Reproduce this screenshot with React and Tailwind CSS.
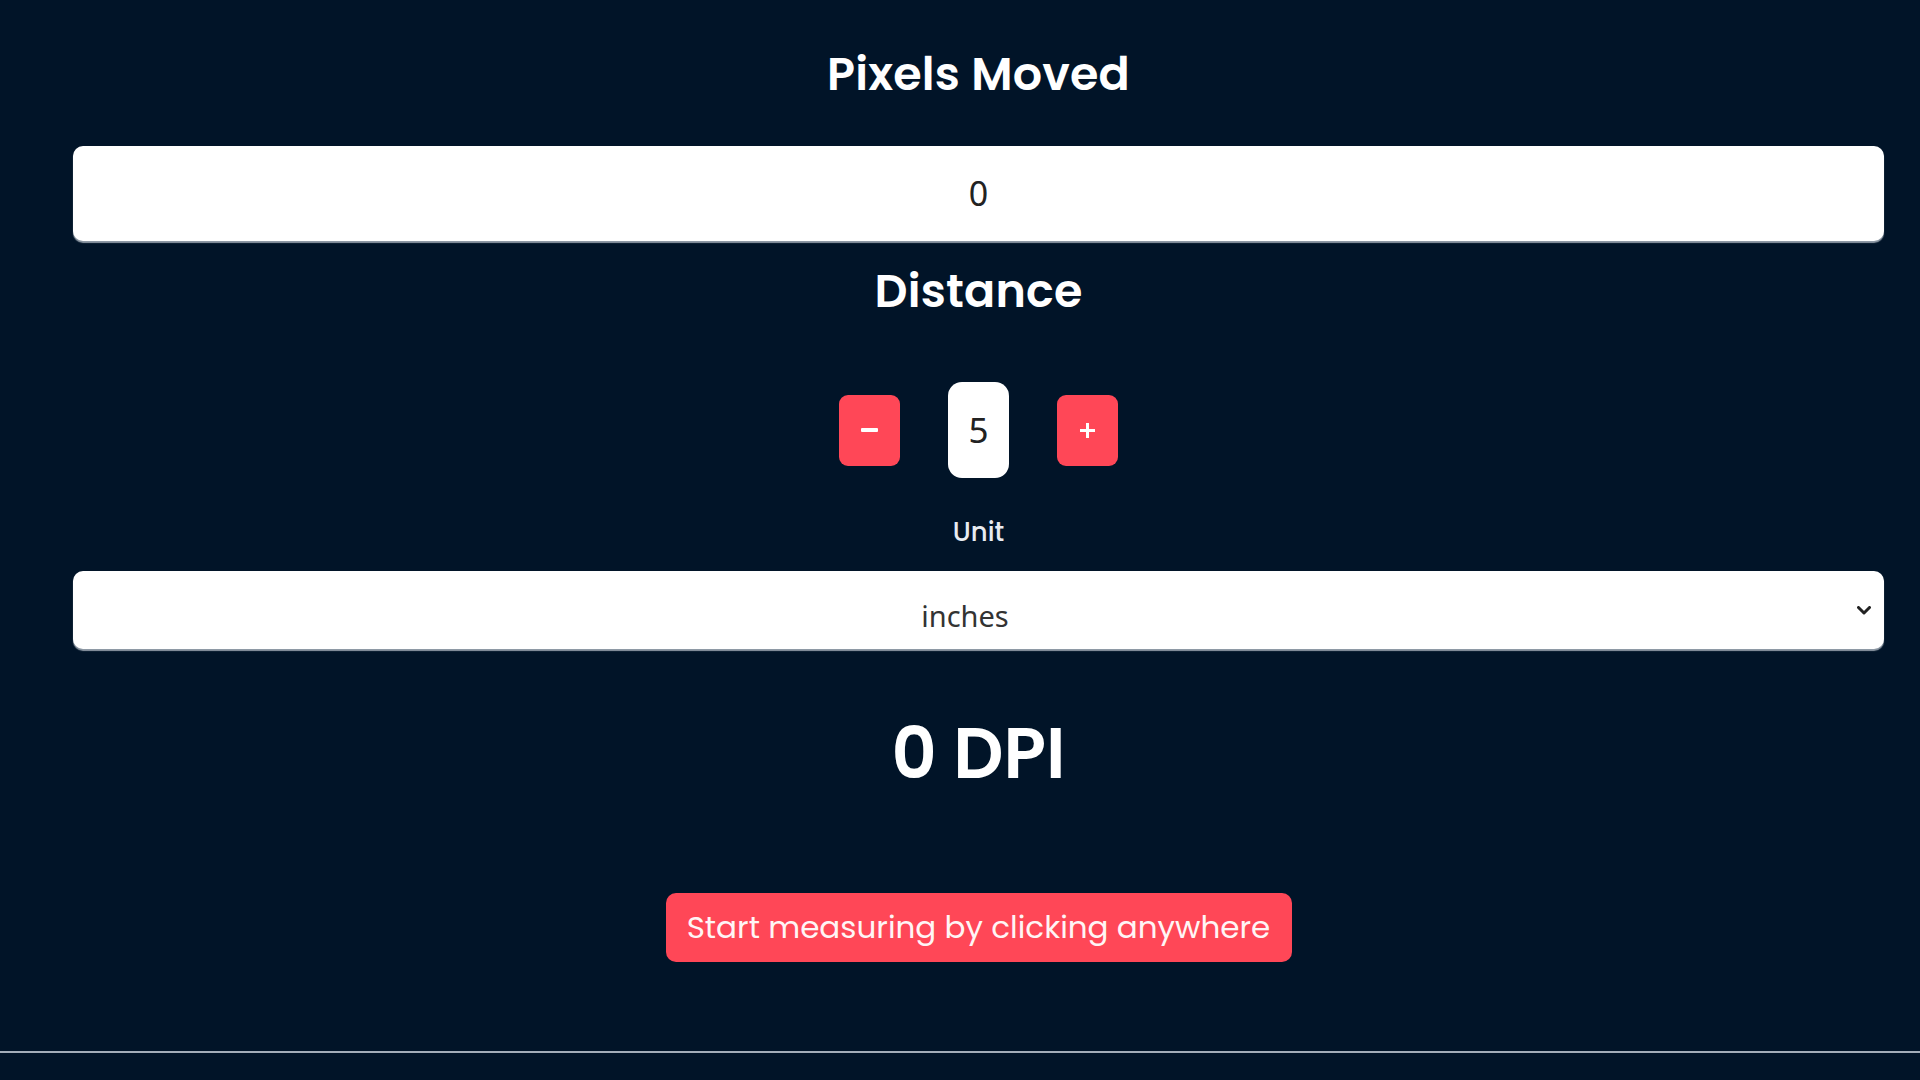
import React, { useState } from "react";

export default function App() {
  const [distance, setDistance] = useState(5);
  const [unit, setUnit] = useState("inches");

  return (
    <div className="min-h-screen bg-[#011428] font-['Poppins','Inter',sans-serif] text-white">
      <div className="pl-[73px] pr-[36px] pt-[44px] flex flex-col items-center">
        <h2 className="text-[46px] font-semibold leading-[60px] tracking-[0.2px]">Pixels Moved</h2>

        <div className="mt-[42px] w-full h-[95px] rounded-[10px] bg-white shadow-[0_2px_1px_rgba(150,160,172,0.95)] flex items-center justify-center">
          <span className="font-['Noto_Sans','Open_Sans',sans-serif] text-[34px] text-[#222]">0</span>
        </div>

        <h2 className="mt-[20px] text-[46px] font-semibold leading-[60px] tracking-[0.2px]">Distance</h2>

        <div className="mt-[61px] h-[96px] flex items-center gap-[48px]">
          <button
            onClick={() => setDistance(distance - 1)}
            className="w-[61px] h-[71px] rounded-[9px] bg-[#ff4757] flex items-center justify-center"
          >
            <span className="block w-[17px] h-[4px] bg-white rounded-[1px]" />
          </button>
          <div className="w-[61px] h-[96px] rounded-[14px] bg-white flex items-center justify-center">
            <span className="font-['Noto_Sans','Open_Sans',sans-serif] text-[35px] text-[#222]">{distance}</span>
          </div>
          <button
            onClick={() => setDistance(distance + 1)}
            className="w-[61px] h-[71px] rounded-[9px] bg-[#ff4757] flex items-center justify-center relative"
          >
            <span className="absolute w-[15px] h-[3px] bg-white" />
            <span className="absolute w-[3px] h-[15px] bg-white" />
          </button>
        </div>

        <label className="mt-[38px] text-[26px] leading-[32px] font-medium text-[#e8ecf2]">Unit</label>

        <div className="mt-[23px] w-full relative">
          <select
            value={unit}
            onChange={(e) => setUnit(e.target.value)}
            className="appearance-none w-full h-[78px] rounded-[10px] bg-white shadow-[0_2px_1px_rgba(150,160,172,0.95)] text-center pt-[12px] pr-[27px] font-['Noto_Sans','Open_Sans',sans-serif] text-[29px] text-[#333] outline-none"
          >
            <option value="inches">inches</option>
            <option value="centimeters">centimeters</option>
            <option value="millimeters">millimeters</option>
          </select>
          <svg
            className="absolute right-[13px] top-[35px] pointer-events-none"
            width="14"
            height="9"
            viewBox="0 0 14 9"
          >
            <polyline points="1.5,1.5 7,7 12.5,1.5" fill="none" stroke="#222" strokeWidth="3" strokeLinecap="round" strokeLinejoin="round" />
          </svg>
        </div>

        <div className="mt-[65px] text-[70px] leading-[80px] font-semibold">0 DPI</div>

        <button className="mt-[99px] h-[69px] w-[626px] rounded-[10px] bg-[#ff4757] text-[31px] font-normal text-[#fff5f5]">
          Start measuring by clicking anywhere
        </button>
      </div>
      <div className="mt-[89px] h-[2px] bg-[#a3adb9]" />
    </div>
  );
}
